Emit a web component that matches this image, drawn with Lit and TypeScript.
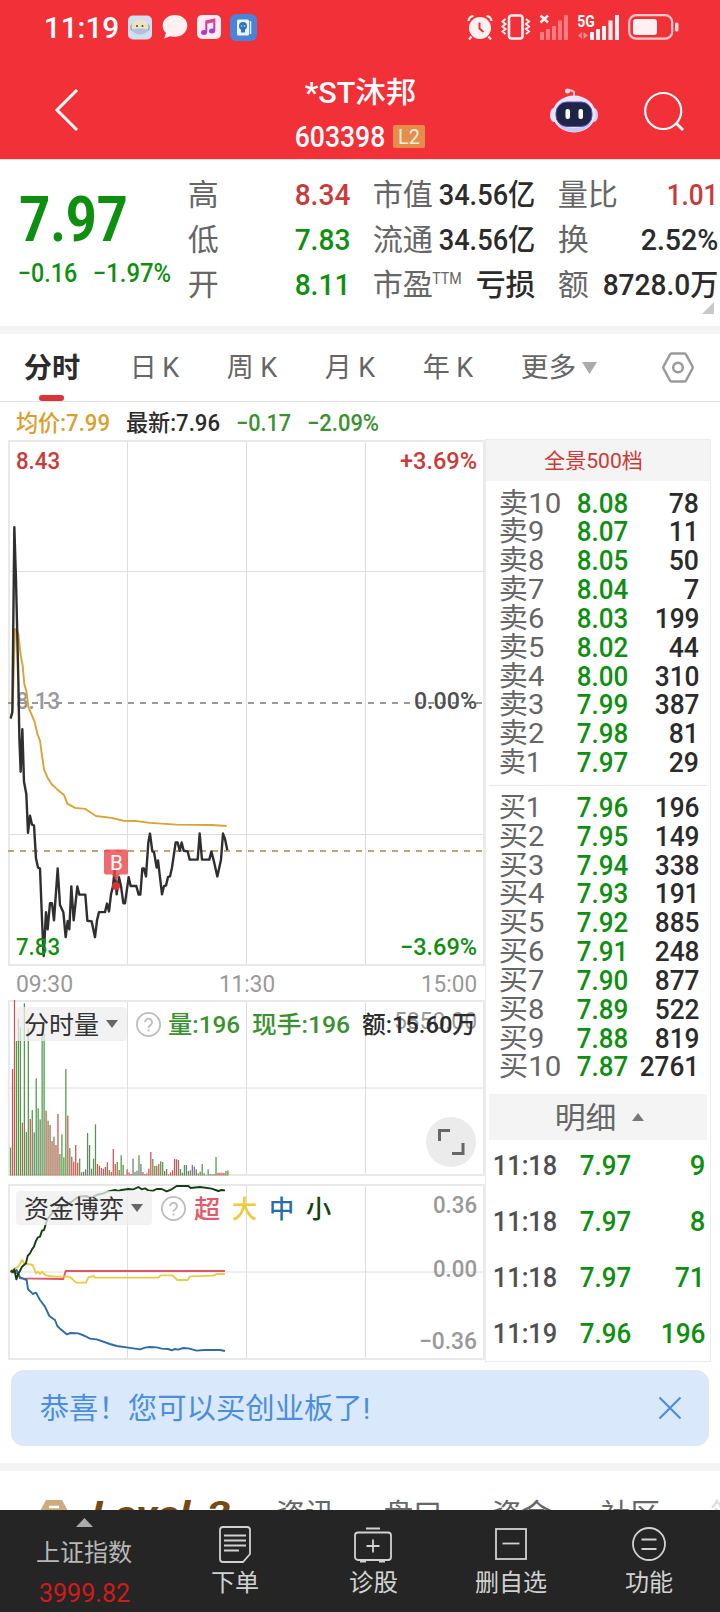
import { LitElement, html, svg, css } from "lit";
import { customElement } from "lit/decorators.js";

// A run of text fitted to a fixed ink width, vertically centred in its own box.
const fitted = (s: string, w: number, fs: number, x: number, cy: number, cls: string, mode = "spacingAndGlyphs") =>
  svg`<text class=${cls} x=${x - 0.045 * fs} y=${cy + 0.36 * fs} font-size=${fs}
    textLength=${w + 0.09 * fs} lengthAdjust=${mode}>${s}</text>`;

const t = (s: string, w: number, fs: number, cls = "", mode = "spacingAndGlyphs") =>
  html`<svg class="t" width=${w} height=${fs}>${fitted(s, w, fs, 0, fs / 2, cls, mode)}</svg>`;

const SELL: [string, string, string][] = [
  ["10", "8.08", "78"], ["9", "8.07", "11"], ["8", "8.05", "50"], ["7", "8.04", "7"], ["6", "8.03", "199"],
  ["5", "8.02", "44"], ["4", "8.00", "310"], ["3", "7.99", "387"], ["2", "7.98", "81"], ["1", "7.97", "29"],
];
const BUY: [string, string, string][] = [
  ["1", "7.96", "196"], ["2", "7.95", "149"], ["3", "7.94", "338"], ["4", "7.93", "191"], ["5", "7.92", "885"],
  ["6", "7.91", "248"], ["7", "7.90", "877"], ["8", "7.89", "522"], ["9", "7.88", "819"], ["10", "7.87", "2761"],
];
const TRADES: [string, string, string][] = [
  ["11:18", "7.97", "9"], ["11:18", "7.97", "8"], ["11:18", "7.97", "71"], ["11:19", "7.96", "196"],
];

const PRICE =
  "32,808 37,790 43,272 48,420 55,700 58,860 62,957 67,838 72,985 79,1020 84,1128 90,1080 96,1105 102,1107 108,1200 114,1225 120,1228 126,1370 131,1473 138,1350 143,1398 150,1325 156,1325 162,1373 173,1228 180,1330 190,1350 197,1420 203,1375 208,1398 214,1278 221,1373 232,1278 238,1301 256,1301 262,1374 275,1376 285,1420 291,1373 297,1350 315,1350 321,1326 327,1348 333,1300 339,1277 344,1230 350,1300 357,1252 363,1277 370,1325 375,1325 386,1252 392,1277 409,1277 416,1301 421,1301 427,1228 432,1228 438,1250 445,1155 450,1130 457,1180 462,1182 470,1225 474,1205 486,1300 492,1277 498,1275 504,1252 510,1250 516,1225 527,1155 533,1155 539,1178 545,1155 551,1178 563,1180 569,1203 593,1203 599,1130 606,1203 628,1203 634,1180 641,1205 652,1250 663,1203 669,1130 675,1145 682,1177";
const AVERAGE =
  "32,808 38,780 45,557 50,560 55,570 62,630 68,660 73,712 80,735 85,775 103,815 112,850 120,870 125,905 132,950 142,972 155,992 170,1005 192,1022 202,1046 225,1058 256,1061 288,1081 335,1086 370,1094 410,1095 450,1100 530,1105 635,1106 680,1109";
const VOLUME =
  "473g 237r 30r 153g 85g 112g 398r 40g 426g 115g 387r 360g 427k 265g 355g 388k 130g 130g 362r 392g 405r 453r 440g 465r 372r 492g 433g 502g 237g 377r 474g 500r 515r 465r 518r 506g 547k 545k 538k 429g 465k 536k 506g 403g 522r 527r 534k 536k 531r 517r 540g 546r 477r 522r 516g 540r 496g 525g 555r 538r 547r 552r 506k 546k 542k 496g 522k 546r 552g 550r 536r 486r 507g 528r 527g 522r 514g 516g 543r 537k 553g 547r 541r 507r 508r 510k 537g 548k 525g 525k 543g 541k 525k 530k 538k 550r 545g 522g 550g 555r 538k 552g 553g 552r 501g 548r 548r 548r 549r 543g 541g";
const FLOW: [string, string][] = [
  ["red", "32,846 55,850 60,865 190,867 197,843 675,843"],
  ["yellow", "32,843 45,835 55,830 66,810 74,820 98,825 108,850 114,845 120,852 126,845 132,852 138,856 150,858 165,860 190,860 208,860 218,868 228,878 258,878 265,862 280,858 286,863 475,863 482,856 518,856 532,870 563,870 570,859 640,857 650,852 675,852"],
  ["blue", "32,843 45,845 50,840 60,862 80,870 84,898 92,905 98,912 108,908 120,930 135,950 148,978 165,990 172,1008 182,1018 200,1033 212,1029 235,1030 255,1038 270,1046 290,1048 330,1062 350,1068 385,1073 420,1078 435,1073 450,1071 470,1072 485,1076 505,1077 515,1081 525,1077 535,1079 550,1074 565,1075 590,1082 612,1080 660,1080 675,1083"],
  ["forest", "32,843 38,846 43,838 49,868 55,850 60,843 66,830 78,820 83,798 90,790 96,778 102,770 108,752 114,742 120,740 126,722 132,720 138,700 141,690 155,670 170,660 180,645 195,650 215,635 235,620 260,618 270,625 290,615 310,610 322,605 345,600 355,603 365,600 385,597 400,598 415,591 425,598 435,595 445,601 460,602 470,597 485,597 500,604 515,598 530,588 565,588 572,594 600,591 635,596 655,603 665,600 675,601"],
];
const BAR: Record<string, string> = { r: "#d2504f", g: "#4c9a45", k: "#77777a" };

@customElement("app-root")
export class AppRoot extends LitElement {
  static styles = css`
    :host { display: block; width: 720px; height: 1612px; overflow: hidden; background: #fff;
      font-family: Roboto, "Noto Sans CJK SC", sans-serif; }
    .page { display: flex; flex-direction: column; width: 720px; height: 1612px; overflow: hidden; }
    svg { display: block; flex: none; overflow: visible; }
    text { font-family: Roboto, "Noto Sans CJK SC", sans-serif; fill: #333; white-space: pre; }
    .w { fill: #fff; } .m { font-weight: 500; } .b { font-weight: 700; }
    .g { fill: #0f8f10; } .r { fill: #cb3a38; } .gr { fill: #666; } .lt { fill: #999; } .mid { fill: #505050; }
    .amber { fill: #d9a02f; } .leaf { fill: #3a9130; } .dk { fill: #2b2b2b; }
    .cream { fill: #ffedd8; } .sky { fill: #4b8edb; } .foot { fill: #d2d2d2; } .idx { fill: #b8b8b8; }
    .neon { fill: #cf1c1a; } .gold { fill: #754a12; font-style: italic; font-weight: 700; }
    .pale { fill: #ddd; } .c1 { fill: #e45a6b; } .c2 { fill: #eccb3c; } .c3 { fill: #2a6ca6; } .c4 { fill: #134410; }

    .top { height: 159px; background: #f23038; border-bottom: 1px solid #fbdcdf; flex: none; }
    .status { display: flex; align-items: center; height: 54px; padding: 0 41px 0 45px; }
    .apps { display: flex; align-items: center; gap: 9px; margin-left: 10px; flex: 1; }
    .sys { display: flex; align-items: center; gap: 8px; }
    .nav { display: grid; grid-template-columns: 296px 129px 1fr; height: 105px; }
    .back { padding: 35px 0 0 54px; }
    .title { display: flex; flex-direction: column; gap: 15px; padding-top: 24px; }
    .name { padding-left: 10px; }
    .code { display: flex; align-items: center; gap: 9px; }
    .badge { display: flex; align-items: center; justify-content: center; width: 32px; height: 23px; background: #e48d4c; border-radius: 2px; }
    .tools { display: flex; justify-content: flex-end; gap: 46px; padding: 34px 36px 0 0; }

    .quote { display: grid; grid-template-columns: 189px 160px 25px 160px 25px 158px; height: 166px; flex: none; }
    .last { display: flex; flex-direction: column; padding: 27px 0 0 19px; gap: 10px; }
    .big { padding-left: 3px; }
    .delta { display: flex; gap: 18px; }
    .stats { display: flex; flex-direction: column; padding-top: 11.5px; }
    .stat { display: flex; justify-content: space-between; align-items: center; height: 45.2px; }
    .lab { display: flex; align-items: center; gap: 1px; }
    .corner { margin: -5px 3px 0 auto; }
    .band { height: 8px; background: #f4f4f4; flex: none; }

    .tabs { display: flex; align-items: center; height: 67px; border-bottom: 1px solid #e3e3e3; padding-left: 25px; flex: none; }
    .tab { display: flex; align-items: center; gap: 7px; height: 67px; }
    .k1 { margin-left: 52px; } .k2 { margin-left: 50px; } .k3 { margin-left: 65px; }
    .on { position: relative; }
    .line { position: absolute; left: 14px; bottom: 0; width: 25px; height: 6px; border-radius: 3px; background: #d8343a; }
    .info { display: flex; align-items: center; height: 38px; box-sizing: border-box; gap: 18px; padding: 3px 0 0 17px; }

    .market { display: flex; height: 961px; flex: none; }
    .left { width: 485px; display: flex; flex-direction: column; flex: none; }
    .pane { position: relative; }
    .times { display: flex; justify-content: space-between; align-items: center; height: 34px; padding: 0 9px 0 17px; }
    .legend { position: absolute; top: 7px; left: 16px; display: flex; align-items: center; gap: 13px; height: 34px; }
    .chip { display: flex; align-items: center; gap: 8px; height: 34px; padding: 0 9px; background: rgba(238, 238, 238, .76); border-radius: 4px; }
    .q { margin-left: -5px; }
    .vol { gap: 14px; }
    .vol .q { margin-right: -6px; }
    .who { gap: 14px; }
    .who .q { margin-right: -5px; }
    .full { position: absolute; left: 426px; top: 117px; }
    .right { width: 226px; box-sizing: border-box; margin-top: 37px; height: 923px; border: 1px solid #ececec; flex: none; }
    .all { height: 41px; background: #f4f4f4; display: flex; align-items: center; justify-content: center; padding-right: 10px; }
    .book { display: grid; grid-auto-rows: 28.83px; padding: 7.2px 12px 0 14px; height: 304px; box-sizing: border-box; }
    .buys { padding-top: 6.5px; height: 308px; }
    .rule { height: 1px; background: #e8e8e8; margin: 0 3px; }
    .lvl { display: grid; grid-template-columns: 78px 49px 1fr; align-items: center; justify-items: start; }
    .end { justify-self: end; }
    .detail { height: 46px; margin: 0 3px; background: #f4f4f4; display: flex; align-items: center; justify-content: center; gap: 17px; padding-left: 3px; box-sizing: border-box; }
    .trades { display: grid; grid-auto-rows: 56px; padding: 0 6px 0 8px; margin-top: -3px; }
    .trade { display: grid; grid-template-columns: 87px 49px 1fr; align-items: center; justify-items: start; }

    .tip { display: flex; align-items: center; justify-content: space-between; height: 76px; margin: 7px 11px 17px; padding: 0 28px 0 30px; box-sizing: border-box; background: #d9e8fb; border-radius: 13px; flex: none; }
    .more { display: flex; height: 39px; padding: 29px 0 0 40px; overflow: hidden; box-sizing: border-box; flex: none; }
    .hex { margin-top: -2px; }
    .more-tabs { display: flex; gap: 52px; margin-left: 48px; }
    .lv { margin-left: 25px; margin-top: -4px; }
    .bar { display: grid; grid-template-columns: 168px 134px 142px 134px 1fr; height: 102px; background: #252525; flex: none; }
    .item { display: flex; flex-direction: column; align-items: center; gap: 7px; padding-top: 16px; }
    .index { gap: 16px; padding-top: 8px; }
    .idx-name { margin-top: -3px; }
  `;

  private chevron = (w: number, h: number, c: string, up = false) =>
    html`<svg width=${w} height=${h}><path fill=${c} d=${up ? `M0 ${h}L${w / 2} 0L${w} ${h}Z` : `M0 0H${w}L${w / 2} ${h}Z`}></path></svg>`;

  private help = html`<svg width="25" height="25" viewBox="0 0 25 25" fill="none" stroke="#bdbdbd" stroke-width="1.8">
    <circle cx="12.5" cy="12.5" r="11.6"></circle><path d="M9 10.2a3.5 3.5 0 1 1 5.3 3c-1.300.8-1.800 1.300-1.800 2.600M12.500 17.500v2"></path></svg>`;

  private grid(top: number, bottom: number, xs = [127.5, 246.5, 365.5], ys: number[] = []) {
    return svg`<g stroke="#dedede" fill="none" stroke-width="1">
      ${xs.map((x) => svg`<path d="M${x} ${top}V${bottom}"></path>`)}
      ${ys.map((y) => svg`<path d="M8 ${y}H485"></path>`)}
      <path stroke="#e9e9e9" stroke-width="2" d="M9 ${top}H484V${bottom}H9Z"></path></g>`;
  }

  private status() {
    return html`<div class="status">
      ${t("11:19", 73, 29, "w m")}
      <div class="apps">
        <svg width="25" height="25" viewBox="0 0 25 25"><rect width="24" height="24" rx="5" y=".5" fill="#cfdff0"></rect>
          <ellipse cx="12" cy="12.500" rx="10" ry="6" fill="#9fa2ae"></ellipse><ellipse cx="12" cy="12" rx="8.500" ry="7.500" fill="#ece2c4"></ellipse>
          <path d="M4 14.500q8-2 16 0q-2 5-8 5t-8-5z" fill="#b3bfdf"></path><circle cx="9" cy="11" r="1" fill="#444"></circle><circle cx="14.500" cy="11" r="1" fill="#444"></circle></svg>
        <svg width="26" height="26" viewBox="0 0 26 26"><path fill="#fff0f1" d="M13 1C6 1 .7 5.500.7 11.500c0 3 1.200 5.600 3.300 7.500L2.200 24.500l6-2.300c1.500.4 3 .6 4.800.6 7 0 12.300-5 12.300-11.300S20 1 13 1z"></path></svg>
        <svg width="24" height="24" viewBox="0 0 24 24"><rect width="24" height="24" rx="5" fill="#fdeaf2"></rect>
          <path d="M9.300 17V6.500l8-1.800v11" fill="none" stroke="#c837a8" stroke-width="2"></path><path d="M9 5.500l9-2v3.500l-9 2z" fill="#e6408e"></path>
          <ellipse cx="7" cy="17.500" rx="3" ry="2.500" fill="#a63cc8"></ellipse><ellipse cx="15" cy="16" rx="3" ry="2.500" fill="#a63cc8"></ellipse></svg>
        <svg width="27" height="27" viewBox="0 0 27 27"><rect width="27" height="27" rx="6" fill="#4a84d6"></rect><rect x="7" y="5.500" width="12" height="16" rx="1.500" fill="#eaf6ff"></rect>
          <path d="M20.500 7v13" stroke="#dcecff" stroke-width="1.500"></path><circle cx="13" cy="12" r="4" fill="#3273c0"></circle><rect x="11" y="15" width="4" height="3.500" fill="#3273c0"></rect><circle cx="11.500" cy="12" r=".8" fill="#bfe0ff"></circle><circle cx="14.500" cy="12" r=".8" fill="#bfe0ff"></circle></svg>
      </div>
      <div class="sys">
        <svg width="26" height="26" viewBox="0 0 26 26"><circle cx="13" cy="14" r="11" fill="#fff0f1"></circle><path d="M12.500 8.500v6l4 3.500" fill="none" stroke="#f23038" stroke-width="2"></path>
          <path d="M1.500 7Q2 2.500 6.500 2M24.500 7Q24 2.500 19.500 2M4.500 22.500l-2.500 3M21.500 22.500l2.500 3" fill="none" stroke="#fff0f1" stroke-width="2.200"></path></svg>
        <svg width="30" height="26" viewBox="0 0 30 26" fill="none" stroke="#fff0f1" stroke-width="2"><rect x="8" y="1.500" width="13.500" height="23" rx="2.500" stroke-width="2.600"></rect>
          <path d="M4.500 5L1.500 7.500l3 2.500-3 2.500 3 2.500-3 2.500 3 2.500M25 5l3 2.500-3 2.500 3 2.500-3 2.500 3 2.500-3 2.500"></path></svg>
        <svg width="30" height="26" viewBox="0 0 30 26" fill="#fa7b80"><path d="M1 18h4v8H1zM7 15h4v11H7zM13 12h4v14h-4zM19 6.500h4V26h-4zM25 1h4v25h-4z"></path>
          <path d="M1.500 1.500l7.500 7M9 1.500l-7.500 7" stroke="#fff0f1" stroke-width="2.500"></path></svg>
        <svg width="43" height="26" viewBox="0 0 43 26" fill="#fff0f1"><path d="M13 18h4v8h-4zM19 15h4v11h-4zM25 12h4v14h-4zM31.500 6.500h4V26h-4zM38 1h4v25h-4z"></path>
          <path d="M1 21.500l4-3.500v7zM6.500 18l4.500 3.500-4.500 3.500z" fill="#f98a8e"></path>${fitted("5G", 16, 16, 1, 7, "w b")}</svg>
        <svg width="51" height="26" viewBox="0 0 51 26"><rect x="1.200" y="1.200" width="43" height="23.500" rx="7" fill="none" stroke="#ffc9cc" stroke-width="2.200"></rect>
          <rect x="5" y="5" width="24" height="16" rx="3" fill="#fff0f1"></rect><rect x="47" y="8.500" width="3.500" height="9" rx="1.500" fill="#ffd9db"></rect></svg>
      </div>
    </div>`;
  }

  private nav() {
    return html`<div class="nav">
      <div class="back"><svg width="24" height="42" fill="none" stroke="#fff" stroke-width="3"><path d="M23 1L3 21L23 41"></path></svg></div>
      <div class="title">
        <div class="name">${t("*ST沐邦", 109, 29, "w m")}</div>
        <div class="code">${t("603398", 88, 29, "w m")}<div class="badge">${t("L2", 20, 20, "cream")}</div></div>
      </div>
      <div class="tools">
        <svg width="48" height="46" viewBox="0 0 48 46"><path d="M24 9V4q-2-2-6-2" fill="none" stroke="#ffc3cf" stroke-width="2"></path><circle cx="17.500" cy="3" r="2.500" fill="#ffd5df"></circle>
          <ellipse cx="4" cy="27" rx="4" ry="7" fill="#e6e0fc"></ellipse><ellipse cx="44" cy="27" rx="4" ry="7" fill="#d5ccfb"></ellipse>
          <ellipse cx="24" cy="26" rx="21.500" ry="18.500" fill="#e9e5ff"></ellipse><path d="M7 35q17 10 34 0q-6 9-17 9T7 35z" fill="#c3cbf6"></path>
          <rect x="6" y="14" width="36" height="24.500" rx="11" fill="#1f2547" stroke="#5a4fc8" stroke-width="1"></rect>
          <rect x="15.500" y="21" width="4.500" height="10" rx="2" fill="#fff"></rect><rect x="28.500" y="21" width="4.500" height="10" rx="2" fill="#fff"></rect></svg>
        <svg width="40" height="46" viewBox="0 0 40 46" fill="none" stroke="#fff" stroke-width="2.200"><circle cx="19.200" cy="23" r="18"></circle><path d="M32 35l7 7" stroke-width="2.800"></path></svg>
      </div>
    </div>`;
  }

  private quote() {
    const lab = (s: string) => t(s, s.length * 29.3 - 1, 30, "gr");
    const row = (a: unknown, b: unknown) => html`<div class="stat">${a}${b}</div>`;
    return html`<div class="quote">
      <div class="last"><div class="big">${t("7.97", 103, 63, "g b")}</div><div class="delta">${t("−0.16", 57, 26, "g m")}${t("−1.97%", 76, 26, "g m")}</div></div>
      <div class="stats">
        ${row(lab("高"), t("8.34", 53, 30, "r m"))}${row(lab("低"), t("7.83", 53, 30, "g m"))}${row(lab("开"), t("8.11", 53, 30, "g m"))}
      </div><div></div>
      <div class="stats">
        ${row(lab("市值"), t("34.56亿", 94, 30, "dk m"))}${row(lab("流通"), t("34.56亿", 94, 30, "dk m"))}
        ${row(html`<div class="lab">${lab("市盈")}<svg width="28" height="30">${fitted("TTM", 28, 16, 0, 9, "gr")}</svg></div>`, t("亏损", 57, 30, "dk m"))}
      </div><div></div>
      <div class="stats">
        ${row(lab("量比"), t("1.01", 49, 30, "r m"))}${row(lab("换"), t("2.52%", 75, 30, "dk m"))}${row(lab("额"), t("8728.0万", 113, 30, "dk m"))}
        <svg class="corner" width="12" height="12"><path fill="#c9c9c9" d="M0 12L12 0V12Z"></path></svg>
      </div>
    </div>`;
  }

  private tabs() {
    return html`<div class="tabs">
      <div class="tab on">${t("分时", 54, 28, "dk b")}<i class="line"></i></div>
      <div class="tab k1">${t("日K", 47, 27, "gr", "spacing")}</div>
      <div class="tab k2">${t("周K", 48, 27, "gr", "spacing")}</div>
      <div class="tab k2">${t("月K", 48, 27, "gr", "spacing")}</div>
      <div class="tab k2">${t("年K", 48, 27, "gr", "spacing")}</div>
      <div class="tab k2">${t("更多", 53, 27, "gr")}${this.chevron(15, 12, "#aaa")}</div>
      <div class="tab k3"><svg width="32" height="31" viewBox="0 0 32 31" fill="none" stroke="#999" stroke-width="2.500" stroke-linejoin="round">
        <path d="M9.500 1.500h13q1 0 1.500 1l6.500 12q.5 1 0 2L24 28.500q-.5 1-1.500 1h-13q-1 0-1.500-1L1.500 16.500q-.5-1 0-2L8 2.500q.5-1 1.500-1z"></path><circle cx="16" cy="15.500" r="4.800"></circle></svg></div>
    </div>`;
  }

  private priceChart() {
    return html`<div class="pane"><svg width="485" height="526" viewBox="0 440 485 526">
      ${this.grid(441, 965, undefined, [571.5, 834.5])}
      <path d="M8 703H485" stroke="#999" stroke-width="2" stroke-dasharray="6 6"></path>
      <path d="M8 851H485" stroke="#c3a273" stroke-width="2" stroke-dasharray="6 6"></path>
      ${fitted("8.13", 42, 24, 17, 700, "lt m")}
      <g transform="translate(0 430) scale(.33333 .35714)" fill="none" stroke-linejoin="round">
        <polyline points=${AVERAGE} stroke="#d9a336" stroke-width="1.900" vector-effect="non-scaling-stroke"></polyline>
        <polyline points=${PRICE} stroke="#2f2f2f" stroke-width="2.400" vector-effect="non-scaling-stroke"></polyline>
      </g>
      <circle cx="116" cy="886" r="4" fill="#d93234"></circle>
      <path d="M106 849.500h20q2 0 2 2v21q0 2-2 2h-6l-4 6-4-6h-6q-2 0-2-2v-21q0-2 2-2z" fill="#e94b4f" fill-opacity=".82"></path>
      ${fitted("B", 11, 21, 111, 862, "w")}
      ${fitted("8.43", 42, 24, 17, 460, "r m")}${fitted("+3.69%", 75, 24, 401, 460, "r m")}
      ${fitted("0.00%", 61, 24, 415, 700, "mid m")}
      ${fitted("7.83", 42, 24, 17, 946, "g m")}${fitted("−3.69%", 75, 24, 401, 946, "g m")}
    </svg></div>
    <div class="times">${t("09:30", 55, 24, "lt")}${t("11:30", 54, 24, "lt")}${t("15:00", 54, 24, "lt")}</div>`;
  }

  private volumeChart() {
    return html`<div class="pane"><svg width="485" height="184" viewBox="0 1000 485 184">
      ${this.grid(1001, 1175, undefined, [1088])}
      ${VOLUME.split(" ").map((v, i) => {
        const y = 990 + parseInt(v) / 3;
        return svg`<rect x=${9.900 + i * 1.976} y=${y} width="1.250" height=${1175.600 - y} fill=${BAR[v.slice(-1)]}></rect>`;
      })}
      ${fitted("5850.00", 81, 24, 395, 1020, "lt")}
    </svg>
    <div class="legend vol"><div class="chip">${t("分时量", 73, 25)}${this.chevron(12, 8, "#666")}</div><div class="q">${this.help}</div>
      ${t("量:196", 70, 24, "leaf m")}${t("现手:196", 96, 24, "leaf m")}${t("额:15.60万", 112, 24, "dk m")}</div>
    <svg class="full" width="50" height="50" fill="none"><circle cx="25" cy="25" r="25" fill="#ebebeb"></circle>
      <path d="M13.500 24V13.500H24M26 36.500H37V26" stroke="#666" stroke-width="3"></path></svg>
    </div>`;
  }

  private flowChart() {
    const stroke: Record<string, string> = { red: "#dd5568", yellow: "#e9cc45", blue: "#2d6da5", forest: "#143f12" };
    return html`<div class="pane"><svg width="485" height="178" viewBox="0 1184 485 178">
      ${this.grid(1185, 1359, undefined, [1272])}
      <g transform="translate(0 990) scale(.33333)" fill="none" stroke-linejoin="round">
        ${FLOW.map(([k, p]) => svg`<polyline points=${p} stroke=${stroke[k]} stroke-width="1.900" vector-effect="non-scaling-stroke"></polyline>`)}
      </g>
      ${fitted("0.36", 42, 24, 434, 1204, "lt m")}${fitted("0.00", 42, 24, 434, 1268.500, "lt m")}${fitted("−0.36", 56, 24, 420, 1340, "lt m")}
    </svg>
    <div class="legend who"><div class="chip">${t("资金博弈", 98, 25)}${this.chevron(12, 8, "#666")}</div><div class="q">${this.help}</div>
      ${t("超", 24, 25, "c1 m")}${t("大", 23, 25, "c2 m")}${t("中", 23, 25, "c3 m")}${t("小", 23, 25, "c4 m")}</div>
    </div>`;
  }

  private level(side: string, [n, p, q]: [string, string, string]) {
    return html`<div class="lvl">${t(side + n, n.length === 2 ? 60 : n === "1" ? 40 : 43, 28, "gr")}${t(p, 49, 28, "g m")}
      <div class="end">${t(q, q.length * 14.600 - 1.500, 28, "dk m")}</div></div>`;
  }

  private side() {
    return html`<div class="right">
      <div class="all">${t("全景500档", 97, 21, "r")}</div>
      <div class="book">${SELL.map((r) => this.level("卖", r))}</div>
      <div class="rule"></div>
      <div class="book buys">${BUY.map((r) => this.level("买", r))}</div>
      <div class="detail">${t("明细", 59, 30, "gr")}${this.chevron(12, 8, "#777", true)}</div>
      <div class="trades">${TRADES.map(([a, b, q]) => html`<div class="trade">${t(a, 62, 28, "mid m")}${t(b, 49, 28, "g m")}
        <div class="end">${t(q, q.length * 14.600 - 1.500, 28, "g m")}</div></div>`)}</div>
    </div>`;
  }

  render() {
    return html`<div class="page">
      <div class="top">${this.status()}${this.nav()}</div>
      ${this.quote()}
      <div class="band"></div>
      ${this.tabs()}
      <div class="market">
        <div class="left">
          <div class="info">${t("均价:7.99", 92, 23, "amber m")}${t("最新:7.96", 92, 23, "dk m")}${t("−0.17", 53, 23, "leaf m")}${t("−2.09%", 70, 23, "leaf m")}</div>
          ${this.priceChart()}${this.volumeChart()}${this.flowChart()}
        </div>
        ${this.side()}
      </div>
      <div class="tip">${t("恭喜！您可以买创业板了!", 328, 29, "sky")}
        <svg width="22" height="22" fill="none" stroke="#4b8edb" stroke-width="2.200"><path d="M.5.5l21 21M21.500.5l-21 21"></path></svg></div>
      <div class="band"></div>
      <div class="more">
        <svg class="hex" width="28" height="28"><path d="M6 2h16l6 11-6 13H6L0 13z" fill="#cdab7c"></path><path d="M9 9h10" stroke="#fff" stroke-width="2.500"></path></svg>
        <div class="lv">${t("Level-2", 136, 34, "gold")}</div>
        <div class="more-tabs">${t("资讯", 56, 29, "gr")}${t("盘口", 56, 29, "gr")}${t("资金", 57, 29, "gr")}${t("社区", 57, 29, "gr")}${t("简", 28, 29, "pale")}</div>
      </div>
      <div class="bar">
        <div class="item index">${this.chevron(17, 9, "#aaa", true)}<div class="idx-name">${t("上证指数", 94, 24, "idx")}</div>${t("3999.82", 89, 25, "neon")}</div>
        <div class="item"><svg width="32" height="37" viewBox="0 0 32 37" fill="none" stroke="#d2d2d2" stroke-width="1.800"><path d="M4 1h24q3 0 3 3v24l-7 8H4q-3 0-3-3V4q0-3 3-3zM5 9.500h22M5 14.500h22M5 19.500h22M5 24.500h15"></path></svg>${t("下单", 46, 24, "foot")}</div>
        <div class="item"><svg width="38" height="37" viewBox="0 0 38 37" fill="none" stroke="#d2d2d2" stroke-width="1.800"><rect x="1" y="6.500" width="36" height="27.500" rx="3"></rect><path d="M12 2.500h14M19 13.500v13M12.500 20h13M6 35.500h6M25 35.500h6"></path></svg>${t("诊股", 47, 24, "foot")}</div>
        <div class="item"><svg width="32" height="37" viewBox="0 0 32 37" fill="none" stroke="#d2d2d2" stroke-width="1.800"><rect x="1" y="3" width="30" height="30"></rect><path d="M7.500 17.500h17"></path></svg>${t("删自选", 70, 24, "foot")}</div>
        <div class="item"><svg width="34" height="37" viewBox="0 0 34 37" fill="none" stroke="#d2d2d2" stroke-width="1.800"><circle cx="17" cy="18" r="16"></circle><path d="M9.500 13.500h15M9.500 23h15"></path></svg>${t("功能", 46, 24, "foot")}</div>
      </div>
    </div>`;
  }
}
